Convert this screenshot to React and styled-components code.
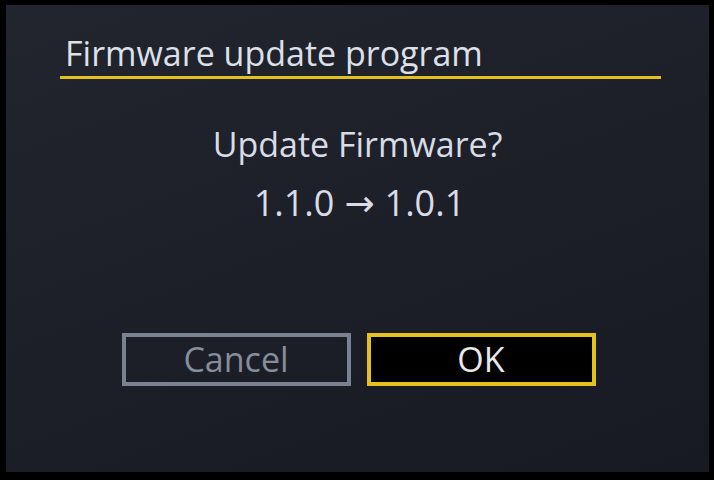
import React from "react";
import styled, { createGlobalStyle } from "styled-components";

const Global = createGlobalStyle`
  html, body { margin: 0; padding: 0; background: #000; }
  body { width: 714px; height: 480px; overflow: hidden; }
  #root { width: 714px; height: 480px; }
`;

const Frame = styled.div`
  width: 714px;
  height: 480px;
  background: #000;
  padding: 5px 5px 8px 6px;
  box-sizing: border-box;
  display: flex;
`;

const Screen = styled.div`
  flex: 1;
  background: linear-gradient(160deg, #22252e 0%, #1d2029 45%, #171a22 100%);
  display: flex;
  flex-direction: column;
  font-family: "Open Sans", "Noto Sans", sans-serif;
  color: #dfe2ea;
`;

const Header = styled.div`
  margin: 28px 48px 0 54px;
  border-bottom: 3px solid #e3c01c;
  padding: 0 0 3px 5px;
`;

const Title = styled.h1`
  margin: 0;
  font-weight: 400;
  font-size: 34px;
  line-height: 40px;
  color: #dde0e8;
`;

const Body = styled.div`
  display: flex;
  flex-direction: column;
  align-items: center;
  margin-top: 44px;
`;

const Question = styled.div`
  font-size: 34px;
  line-height: 42px;
  color: #d9dce6;
`;

const Version = styled.div`
  font-size: 36px;
  line-height: 44px;
  margin-top: 16px;
  color: #d9dce6;
  display: flex;
  align-items: center;
  gap: 10px;
  padding-left: 4px;
`;

const Arrow = styled.span`
  font-family: "DejaVu Sans", sans-serif;
  font-size: 36px;
  line-height: 1;
  margin-top: 2px;
`;

const Buttons = styled.div`
  display: flex;
  justify-content: center;
  gap: 16px;
  margin-top: 108px;
  padding-left: 2px;
`;

const Button = styled.div`
  width: 229px;
  height: 53px;
  box-sizing: border-box;
  border: 4px solid ${(p) => (p.$active ? "#e5c11d" : "#7a8193")};
  background: ${(p) => (p.$active ? "#000" : "transparent")};
  color: ${(p) => (p.$active ? "#e6e8ee" : "#878d9b")};
  display: flex;
  align-items: center;
  justify-content: center;
  font-size: 34px;
  line-height: 1;
  padding-bottom: 2px;
`;

export default function App() {
  return (
    <>
      <Global />
      <Frame>
        <Screen>
          <Header>
            <Title>Firmware update program</Title>
          </Header>
          <Body>
            <Question>Update Firmware?</Question>
            <Version>
              <span>1.1.0</span>
              <Arrow>→</Arrow>
              <span>1.0.1</span>
            </Version>
          </Body>
          <Buttons>
            <Button>Cancel</Button>
            <Button $active>OK</Button>
          </Buttons>
        </Screen>
      </Frame>
    </>
  );
}
